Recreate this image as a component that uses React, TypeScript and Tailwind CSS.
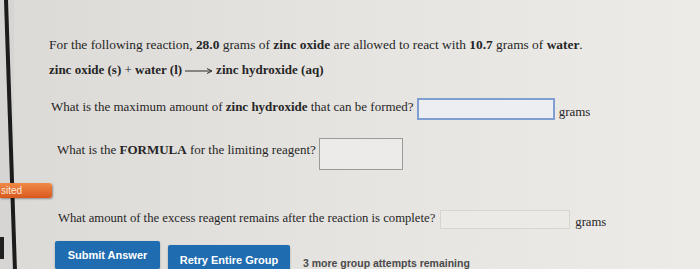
const serif = { fontFamily: '"Liberation Serif", "Times New Roman", serif' }

function Arrow() {
  return (
    <svg width="28" height="8" viewBox="0 0 28 8" className="mx-[3px] inline-block align-middle">
      <line x1="0" y1="4" x2="26" y2="4" stroke="#2a2a2a" strokeWidth="1" />
      <path d="M22 1.5 L27 4 L22 6.5" fill="none" stroke="#2a2a2a" strokeWidth="1" />
    </svg>
  )
}

export default function App() {
  return (
    <div className="relative flex h-[269px] w-[700px] overflow-hidden bg-gradient-to-r from-[#dcdad6] via-[#e6e4e1] to-[#ecebe8] text-[#262626]">
      {/* left page edge */}
      <div className="relative z-10 w-[14px] shrink-0 bg-[#d6d5d3]">
        <div className="absolute left-[4px] top-0 h-[290px] w-[4px] origin-top rotate-[-1.9deg] bg-[#1c1c1c]" />
        <div className="absolute left-0 top-[237px] h-[22px] w-[4px] bg-[#202020]" />
      </div>

      {/* visited tab */}
      <div
        className="absolute left-0 top-[183px] z-20 flex h-[15px] w-[52px] items-center rounded-r-[3px] bg-gradient-to-b from-[#f08a45] to-[#d9571c] pl-[1px] text-[10px] text-[#fbe9dc] shadow-[1px_1px_2px_rgba(0,0,0,0.35)]"
        style={{ fontFamily: '"Liberation Sans", Arial, sans-serif' }}
      >
        sited
      </div>

      <div className="flex flex-1 flex-col pt-[37px] text-[13px] leading-[16px]" style={serif}>
        <p className="ml-[35px] whitespace-nowrap text-[13.4px]">
          For the following reaction, <b>28.0</b> grams of <b>zinc oxide</b> are allowed to react with <b>10.7</b> grams of{' '}
          <b>water</b>.
        </p>

        <p className="ml-[35px] mt-[9px] whitespace-nowrap font-bold">
          zinc oxide (s) <span className="font-normal">+</span> water (l)
          <Arrow />
          zinc hydroxide (aq)
        </p>

        <div className="ml-[37px] mt-[20px] flex items-start whitespace-nowrap">
          <span className="pt-[1px]">
            What is the maximum amount of <b>zinc hydroxide</b> that can be formed?
          </span>
          <div className="ml-[3px] h-[22px] w-[138px] border-2 border-[#7f9fd2] bg-[#eceef1]" />
          <span className="ml-[4px] mt-[6px]">grams</span>
        </div>

        <div className="ml-[43px] mt-[18px] flex items-start whitespace-nowrap">
          <span className="pt-[4px]">
            What is the <b>FORMULA</b> for the limiting reagent?
          </span>
          <div className="ml-[3px] h-[32px] w-[84px] border border-[#9a9a98] bg-[#ecebe9]" />
        </div>

        <div className="ml-[44px] mt-[38px] flex items-center whitespace-nowrap text-[12.7px]">
          <span className="-mt-[3px]">What amount of the excess reagent remains after the reaction is complete?</span>
          <div className="ml-[5px] h-[19px] w-[130px] border border-[#d6d5d2] bg-[#eceae7]" />
          <span className="ml-[5px] mt-[6px]">grams</span>
        </div>

        <div
          className="ml-[41px] mt-[11px] flex items-start whitespace-nowrap"
          style={{ fontFamily: '"Liberation Sans", Arial, sans-serif' }}
        >
          <button className="flex h-[28px] w-[105px] items-center justify-center rounded-[2px] bg-[#1f6cb0] text-[11px] font-bold text-white shadow-[0_1px_2px_rgba(0,0,0,0.3)]">
            Submit Answer
          </button>
          <button className="ml-[8px] mt-[4px] flex h-[30px] w-[122px] items-center justify-center rounded-[2px] bg-[#1f6cb0] text-[11px] font-bold text-white shadow-[0_1px_2px_rgba(0,0,0,0.3)]">
            Retry Entire Group
          </button>
          <span className="ml-[13px] mt-[14px] text-[10.5px] font-bold text-[#4a4a4a]">3 more group attempts remaining</span>
        </div>
      </div>
    </div>
  )
}
